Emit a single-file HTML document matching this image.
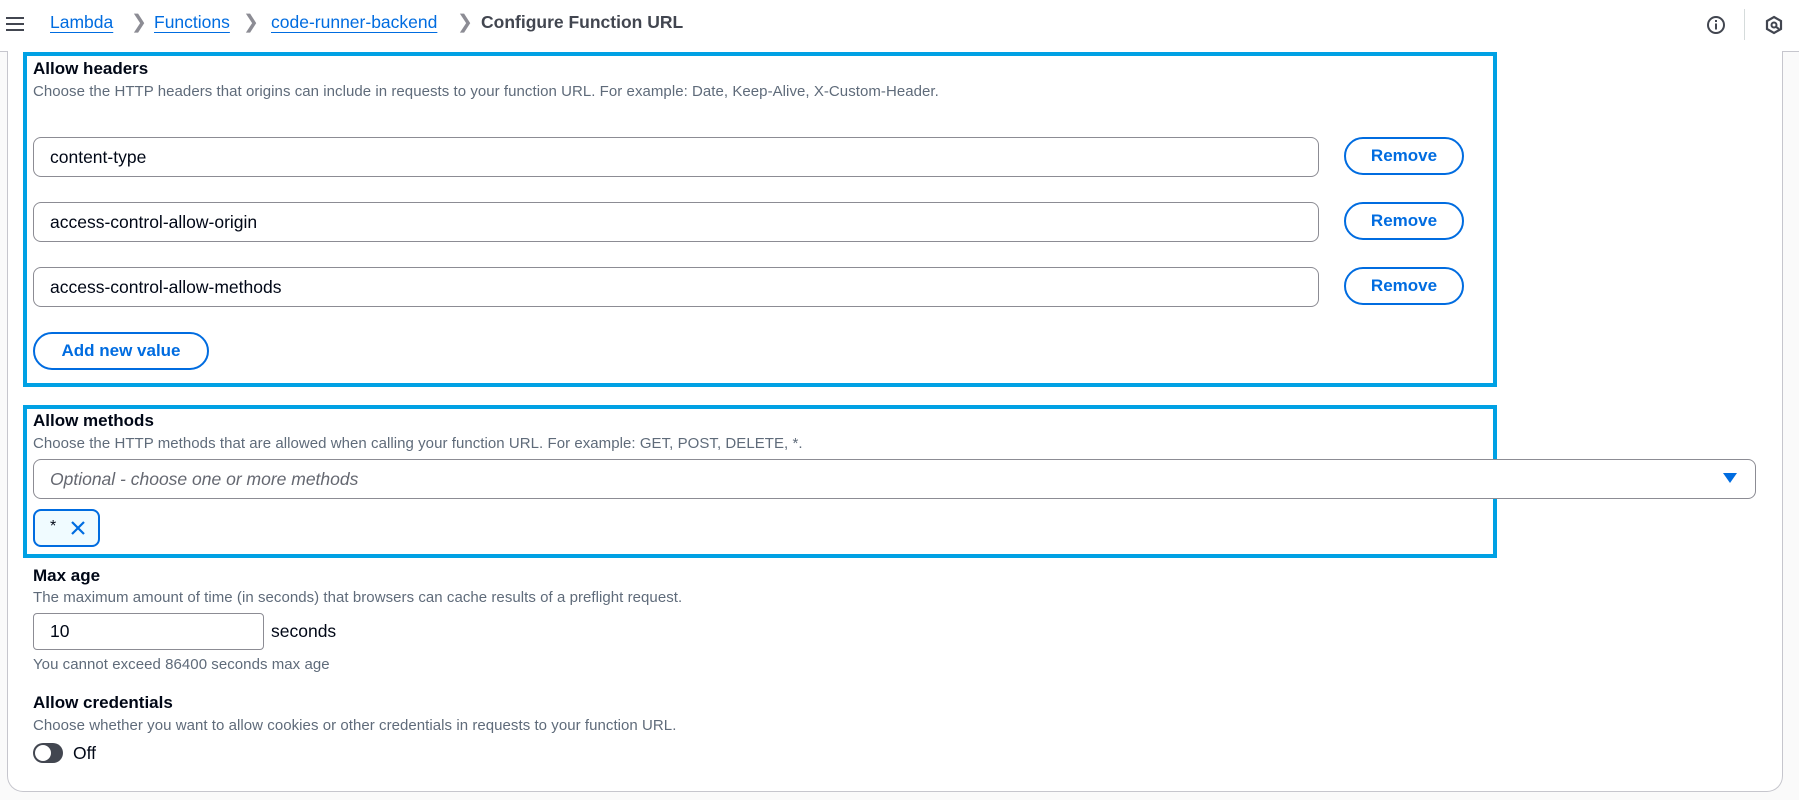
<!DOCTYPE html>
<html><head><meta charset="utf-8"><style>
*{box-sizing:border-box;margin:0;padding:0}
body{width:1799px;height:800px;background:#fafafa;font-family:"Liberation Sans",Arial,sans-serif;color:#000716;position:relative;overflow:hidden}
.a{position:absolute;white-space:nowrap}
.hdr{left:0;top:0;width:1799px;height:52px;background:#fff;border-bottom:1px solid #c6c6cd}
.bc{font-size:17.5px;top:12px}
.bc a{color:#006ce0;text-decoration:underline;text-underline-offset:4px}
.chev{color:#8c8c94;font-size:19px;top:11px}
.card{left:7px;top:51px;width:1776px;height:741px;background:#fff;border:1px solid #c6c6cd;border-top:none;border-radius:0 0 16px 16px}
.hl{border:4px solid #00a1e4}
.t{font-weight:bold;font-size:17px;color:#000716}
.d{font-size:15px;color:#5f6b7a;letter-spacing:0.05px}
.inp{border:1px solid #8c8c94;border-radius:8px;background:#fff;font-size:17.5px;padding-left:16px;display:flex;align-items:center}
.btn{border:2px solid #006ce0;border-radius:20px;color:#006ce0;font-weight:bold;font-size:17px;display:flex;align-items:center;justify-content:center;background:#fff}
</style></head><body>
<div class="a hdr"></div>
<div class="a" style="left:6px;top:17px;width:18px;height:2px;background:#424650;box-shadow:0 6px 0 #424650,0 12px 0 #424650"></div>
<div class="a bc" style="left:50px"><a>Lambda</a></div>
<div class="a bc chev" style="left:131px">&#x276F;</div>
<div class="a bc" style="left:154px"><a>Functions</a></div>
<div class="a bc chev" style="left:243px">&#x276F;</div>
<div class="a bc" style="left:271px"><a>code-runner-backend</a></div>
<div class="a bc chev" style="left:457px">&#x276F;</div>
<div class="a bc" style="left:481px;font-weight:bold;color:#424650">Configure Function URL</div>
<svg class="a" style="left:1706px;top:15px" width="20" height="20" viewBox="0 0 20 20"><circle cx="10" cy="10" r="8" fill="none" stroke="#424650" stroke-width="2"/><rect x="9" y="8.5" width="2" height="6" fill="#424650"/><rect x="9" y="5" width="2" height="2" fill="#424650"/></svg>
<div class="a" style="left:1744px;top:9px;width:1px;height:31px;background:#d5dbdb"></div>
<svg class="a" style="left:1764px;top:15px" width="20" height="20" viewBox="0 0 20 20"><path d="M10 2 L17 6 L17 14 L10 18 L3 14 L3 6 Z" fill="none" stroke="#424650" stroke-width="2.2"/><circle cx="10" cy="10" r="2.5" fill="none" stroke="#424650" stroke-width="2"/><path d="M11.5 11.5 L15 14" stroke="#424650" stroke-width="2"/></svg>
<div class="a card"></div>

<div class="a hl" style="left:23px;top:52px;width:1474px;height:335px"></div>
<div class="a t" style="left:33px;top:59px">Allow headers</div>
<div class="a d" style="left:33px;top:83px">Choose the HTTP headers that origins can include in requests to your function URL. For example: Date, Keep-Alive, X-Custom-Header.</div>
<div class="a inp" style="left:33px;top:137px;width:1286px;height:40px">content-type</div>
<div class="a btn" style="left:1344px;top:137px;width:120px;height:38px">Remove</div>
<div class="a inp" style="left:33px;top:202px;width:1286px;height:40px">access-control-allow-origin</div>
<div class="a btn" style="left:1344px;top:202px;width:120px;height:38px">Remove</div>
<div class="a inp" style="left:33px;top:267px;width:1286px;height:40px">access-control-allow-methods</div>
<div class="a btn" style="left:1344px;top:267px;width:120px;height:38px">Remove</div>
<div class="a btn" style="left:33px;top:332px;width:176px;height:38px">Add new value</div>

<div class="a hl" style="left:23px;top:405px;width:1474px;height:153px"></div>
<div class="a t" style="left:33px;top:411px">Allow methods</div>
<div class="a d" style="left:33px;top:435px">Choose the HTTP methods that are allowed when calling your function URL. For example: GET, POST, DELETE, *.</div>
<div class="a inp" style="left:33px;top:459px;width:1723px;height:40px;font-style:italic;color:#656871">Optional - choose one or more methods</div>
<svg class="a" style="left:1723px;top:473px" width="14" height="11"><path d="M0 0 L14 0 L7 10 Z" fill="#006ce0"/></svg>
<div class="a" style="left:33px;top:509px;width:67px;height:38px;border:2px solid #006ce0;border-radius:8px;background:#f0fbff"></div>
<div class="a" style="left:50px;top:518px;font-size:16px">*</div>
<svg class="a" style="left:70px;top:520px" width="16" height="16"><path d="M2 2 L14 14 M14 2 L2 14" stroke="#006ce0" stroke-width="2.2"/></svg>

<div class="a t" style="left:33px;top:566px">Max age</div>
<div class="a d" style="left:33px;top:589px">The maximum amount of time (in seconds) that browsers can cache results of a preflight request.</div>
<div class="a inp" style="left:33px;top:613px;width:231px;height:37px;border-radius:4px">10</div>
<div class="a" style="left:271px;top:621px;font-size:17.5px">seconds</div>
<div class="a d" style="left:33px;top:656px">You cannot exceed 86400 seconds max age</div>
<div class="a t" style="left:33px;top:693px">Allow credentials</div>
<div class="a d" style="left:33px;top:717px">Choose whether you want to allow cookies or other credentials in requests to your function URL.</div>
<div class="a" style="left:33px;top:743px;width:30px;height:20px;border-radius:10px;background:#424650"></div>
<div class="a" style="left:35px;top:745px;width:16px;height:16px;border-radius:8px;background:#fff"></div>
<div class="a" style="left:73px;top:743px;font-size:17.5px">Off</div>
</body></html>
